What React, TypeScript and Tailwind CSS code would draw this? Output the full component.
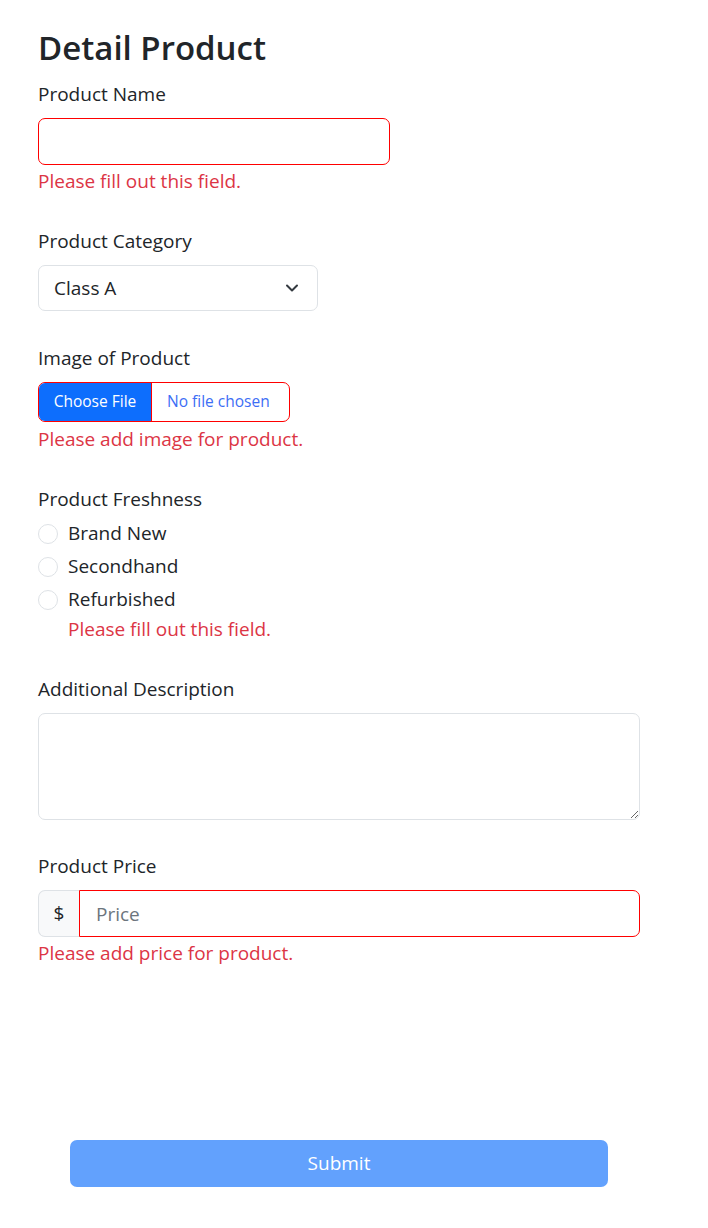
import { useState } from "react"

const font = { fontFamily: '"Open Sans", "Noto Sans", sans-serif' }

function Label({ children, className = "" }: { children: string; className?: string }) {
  return <div className={`text-[19px] leading-[29px] text-[#212529] ${className}`}>{children}</div>
}

function Feedback({ children, className = "" }: { children: string; className?: string }) {
  return <div className={`text-[19px] leading-[24px] text-[#dc3545] ${className}`}>{children}</div>
}

export default function App() {
  const [category, setCategory] = useState("Class A")
  const freshness = ["Brand New", "Secondhand", "Refurbished"]

  return (
    <div className="min-h-[1228px] bg-white" style={font}>
      <form className="pl-[38px] pt-[25px]" onSubmit={e => e.preventDefault()}>
        <h2 className="text-[33px] font-semibold leading-[46px] text-[#212529]">Detail Product</h2>

        <Label className="mt-[9px]">Product Name</Label>
        <input
          type="text"
          className="mt-[9px] block h-[47px] w-[352px] rounded-[7px] border border-[#ff0000] px-4 text-[19px] outline-none"
        />
        <Feedback className="mt-[4px]">Please fill out this field.</Feedback>

        <Label className="mt-[34px]">Product Category</Label>
        <div className="relative mt-[9px] w-[280px]">
          <select
            value={category}
            onChange={e => setCategory(e.target.value)}
            className="block h-[46px] w-full appearance-none rounded-[7px] border border-[#dee2e6] bg-white pl-[15px] text-[19px] text-[#212529] outline-none"
          >
            <option>Class A</option>
            <option>Class B</option>
            <option>Class C</option>
          </select>
          <svg
            className="pointer-events-none absolute right-[19px] top-[17px]"
            width="14"
            height="12"
            viewBox="0 0 14 12"
            fill="none"
          >
            <path d="M2 3.5l5 5 5-5" stroke="#343a40" strokeWidth="2" strokeLinecap="round" strokeLinejoin="round" />
          </svg>
        </div>

        <Label className="mt-[33px]">Image of Product</Label>
        <label className="mt-[9px] flex h-[40px] w-[252px] overflow-hidden rounded-[7px] border border-[#ff0000]">
          <span className="flex w-[113px] items-center justify-center border-r border-[#ff0000] bg-[#0d6efd] text-[15.5px] text-white">
            Choose File
          </span>
          <span className="flex flex-1 items-center pl-[15px] text-[15.5px] text-[#3d6ef5]">No file chosen</span>
          <input type="file" className="hidden" />
        </label>
        <Feedback className="mt-[5px]">Please add image for product.</Feedback>

        <Label className="mt-[34px]">Product Freshness</Label>
        <div className="mt-[5px] flex flex-col gap-[4px]">
          {freshness.map(f => (
            <label key={f} className="flex h-[29px] items-center">
              <input
                type="radio"
                name="freshness"
                className="h-[20px] w-[20px] appearance-none rounded-full border border-[#dee2e6] bg-white"
              />
              <span className="ml-[10px] text-[19px] leading-[29px] text-[#212529]">{f}</span>
            </label>
          ))}
        </div>
        <Feedback className="ml-[30px] mt-[3px]">Please fill out this field.</Feedback>

        <Label className="mt-[34px]">Additional Description</Label>
        <textarea className="mt-[9px] block h-[107px] w-[602px] rounded-[7px] border border-[#dee2e6] px-4 py-2 text-[19px] outline-none" />

        <Label className="mt-[32px]">Product Price</Label>
        <div className="mt-[9px] flex h-[47px] w-[602px]">
          <span className="flex w-[41px] items-center justify-center rounded-l-[7px] border border-r-0 border-[#dee2e6] bg-[#f8f9fa] text-[19px] text-[#212529]">
            $
          </span>
          <input
            type="text"
            placeholder="Price"
            className="h-full flex-1 rounded-r-[7px] border border-[#ff0000] pl-[16px] text-[19px] text-[#212529] outline-none placeholder:text-[#6c757d]"
          />
        </div>
        <Feedback className="mt-[4px]">Please add price for product.</Feedback>

        <button
          type="submit"
          disabled
          className="ml-[32px] mt-[175px] block h-[47px] w-[538px] rounded-[7px] bg-[#62a1fd] text-[19px] text-white"
        >
          Submit
        </button>
      </form>
    </div>
  )
}
